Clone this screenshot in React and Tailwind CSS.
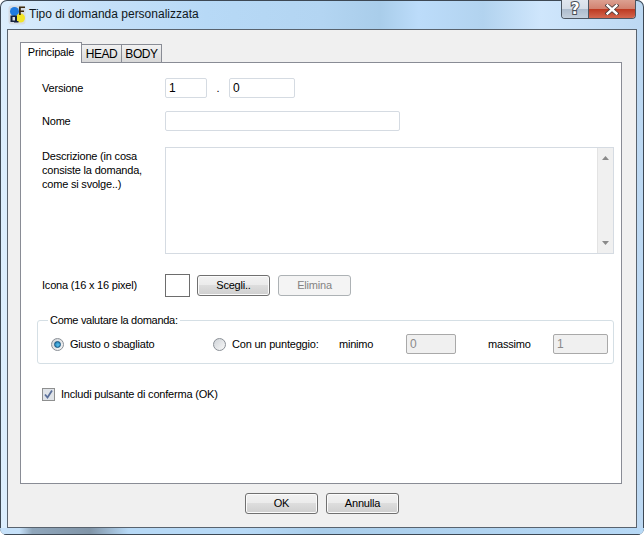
import React from "react";

const btn = "h-[21px] w-[73px] rounded-[3px] border border-[#707070] bg-[linear-gradient(#f2f2f2_0%,#ebebeb_48%,#dddddd_50%,#cfcfcf_100%)] text-center text-[11px] tracking-[-0.2px] text-black shadow-[inset_0_0_0_1px_#fbfbfb]";
const input = "h-[20px] rounded-[2px] border border-[#d5dbe2] bg-white pl-[3px] text-[12px] leading-[18px] text-black";

const AppIcon = () => (
    <svg width="18" height="20" viewBox="0 0 18 20" className="mr-[3px] shrink-0">
        <rect x="0.5" y="0.5" width="17" height="19" rx="3" fill="#d5dce4" />
        <circle cx="6.5" cy="6.5" r="4.5" fill="#1f7be0" />
        <circle cx="12.5" cy="13" r="4.5" fill="#f2e528" />
        <path d="M2.5 10.5h6.5v6.5H2.5z M4.5 12v3.5h2.5V12z" fill="#14213d" fillRule="evenodd" />
        <path d="M6 16h4.5v1.5H6z" fill="#14213d" />
        <path d="M11 1.5h6v1.5h-4.2v2.5H16V7h-3.2v3H11z" fill="#3a2a10" />
    </svg>
);

const Radio = ({ checked }) => (
    <span className={"flex h-[13px] w-[13px] items-center justify-center rounded-full border border-[#8a8f96] bg-[linear-gradient(135deg,#cfd3d8,#f8f8f8)]"}>
        {checked && <span className="h-[7px] w-[7px] rounded-full border border-[#14527f] bg-[radial-gradient(circle_at_60%_60%,#5cc3ef,#1670a8)]" />}
    </span>
);

const Row = ({ label, children, className }) => (
    <div className={"flex " + className}>
        <div className="w-[128px] shrink-0 pl-[5px]">{label}</div>
        {children}
    </div>
);

export default function App() {
    return (
        <div className="relative h-[535px] w-[644px] overflow-hidden rounded-[7px] bg-[linear-gradient(90deg,#dceefd_0%,#c6e1f9_15%,#b7d9f6_32%,#b3d5f2_50%,#a9cdea_59%,#bcdcfa_65%,#b2d3ef_75%,#cfe6fc_84%,#bcd8f2_100%)] font-['Liberation_Sans',sans-serif] text-[11px] tracking-[-0.2px] text-black shadow-[inset_0_0_0_1px_#3d4854]">
            {/* Title bar */}
            <div className="flex h-[29px] items-start pl-[8px] pt-[5px]">
                <AppIcon />
                <span className="mt-[2px] text-[12px] leading-[15px] tracking-normal text-[#101820]">Tipo di domanda personalizzata</span>
            </div>

            {/* Caption buttons */}
            <div className="absolute right-[8px] top-0 flex h-[19px] overflow-hidden rounded-b-[4px] border border-t-0 border-[#4c5662]">
                <div className="flex w-[27px] items-center justify-center border-r border-[#4c5662] bg-[linear-gradient(#e0e6ee_0%,#d5dde7_50%,#adbccd_52%,#c3cfdc_100%)]">
                    <span className="font-['DejaVu_Sans',sans-serif] text-[15px] font-bold leading-none text-white [paint-order:stroke_fill] [-webkit-text-stroke:2px_#4a4f57]">?</span>
                </div>
                <div className="flex w-[46px] items-center justify-center bg-[linear-gradient(#dca091_0%,#d28270_48%,#bd3a22_52%,#d4674f_100%)]">
                    <svg width="14" height="11" viewBox="0 0 14 11">
                        <path d="M2.5 1.5L11.5 9.5M11.5 1.5L2.5 9.5" stroke="#4a3a3a" strokeWidth="4" strokeLinecap="square" />
                        <path d="M2.5 1.5L11.5 9.5M11.5 1.5L2.5 9.5" stroke="#fff" strokeWidth="2.4" strokeLinecap="square" />
                    </svg>
                </div>
            </div>

            {/* Client area */}
            <div className="ml-[7px] h-[499px] w-[630px] border border-[#59636e] bg-[#f0f0f0] pl-[12px] pt-[12px]">
                {/* Tabs */}
                <div className="flex h-[20px] items-end pl-0">
                    <div className="z-10 -mb-px flex h-[21px] w-[62px] items-center justify-center border border-b-0 border-[#898c95] bg-white pb-[2px]">Principale</div>
                    <div className="flex h-[18px] w-[40px] items-center justify-center border border-b-0 border-l-0 border-[#898c95] bg-[linear-gradient(#f2f2f2,#d8d8d8)] text-[12px] tracking-[-0.4px]">HEAD</div>
                    <div className="flex h-[18px] w-[40px] items-center justify-center border border-b-0 border-l-0 border-[#898c95] bg-[linear-gradient(#f2f2f2,#d8d8d8)] text-[12px] tracking-[-0.4px]">BODY</div>
                </div>

                {/* Tab page */}
                <div className="h-[422px] w-[602px] border border-[#898c95] bg-white pl-[16px] pt-[15px]">
                    <Row label={<span className="leading-[20px]">Versione</span>} className="h-[20px]">
                        <div className={input + " w-[42px]"}>1</div>
                        <span className="w-[22px] text-center leading-[20px]">.</span>
                        <div className={input + " w-[66px]"}>0</div>
                    </Row>
                    <Row label={<span className="leading-[20px]">Nome</span>} className="mt-[13px] h-[20px]">
                        <div className={input + " w-[235px]"} />
                    </Row>
                    <Row
                        label={<div className="w-[108px] pt-[2px] leading-[14px]">Descrizione (in cosa consiste la domanda, come si svolge..)</div>}
                        className="mt-[16px] h-[107px]"
                    >
                        <div className="flex h-[107px] w-[449px] justify-end border border-[#d5dbe2] bg-white">
                            <div className="flex w-[16px] flex-col items-center justify-between border-l border-[#e3e3e3] bg-[#f0f0f0] py-[8px] pr-0">
                                <svg width="7" height="4" viewBox="0 0 7 4"><path d="M3.5 0L7 4H0z" fill="#8a8a8a" /></svg>
                                <svg width="7" height="4" viewBox="0 0 7 4"><path d="M3.5 4L7 0H0z" fill="#8a8a8a" /></svg>
                            </div>
                        </div>
                    </Row>
                    <Row label={<span className="leading-[23px]">Icona (16 x 16 pixel)</span>} className="mt-[20px] h-[23px] items-start">
                        <div className="h-[23px] w-[25px] border border-[#6d6d6d] bg-white" />
                        <button className={btn + " ml-[7px] mt-px"}>Scegli..</button>
                        <button className="ml-[8px] mt-px h-[21px] w-[73px] rounded-[3px] border border-[#adb2b5] bg-[#f4f4f4] text-[11px] tracking-[-0.2px] text-[#838383]">Elimina</button>
                    </Row>

                    {/* Group box */}
                    <fieldset className="mt-[16px] h-[51px] w-[577px] rounded-[3px] border border-[#d5dfe5] pl-[13px]">
                        <legend className="-ml-[3px] px-[2px] leading-[15px] tracking-[-0.3px]">Come valutare la domanda:</legend>
                        <div className="mt-[6px] flex h-[20px] items-center">
                            <Radio checked />
                            <span className="ml-[6px] w-[143px]">Giusto o sbagliato</span>
                            <Radio />
                            <span className="ml-[6px] w-[107px]">Con un punteggio:</span>
                            <span className="w-[67px]">minimo</span>
                            <div className="h-[20px] w-[50px] rounded-[2px] border border-[#a9a9a9] bg-[#f0f0f0] pl-[3px] text-[12px] leading-[18px] text-[#8a8a8a]">0</div>
                            <span className="ml-[32px] w-[65px]">massimo</span>
                            <div className="h-[20px] w-[55px] rounded-[2px] border border-[#a9a9a9] bg-[#f0f0f0] pl-[3px] text-[12px] leading-[18px] text-[#8a8a8a]">1</div>
                        </div>
                    </fieldset>

                    {/* Checkbox */}
                    <div className="ml-[5px] mt-[22px] flex items-center">
                        <span className="flex h-[13px] w-[13px] items-center justify-center border border-[#8e8f8f] bg-[#dfe3e8]">
                            <svg width="11" height="11" viewBox="0 0 11 11"><path d="M2 5.5L4.5 8.5L9 1.5" fill="none" stroke="#5a6f9a" strokeWidth="1.8" /></svg>
                        </span>
                        <span className="ml-[6px]">Includi pulsante di conferma (OK)</span>
                    </div>
                </div>

                {/* Footer buttons */}
                <div className="mt-[9px] flex pl-[225px]">
                    <button className={btn + " border-[#3c9fc9] shadow-[inset_0_0_0_1px_#bdeafc]"}>OK</button>
                    <button className={btn + " ml-[8px]"}>Annulla</button>
                </div>
            </div>

            {/* Bottom frame edge */}
            <div className="h-[7px] border-b border-[#3d4854] bg-[linear-gradient(90deg,#c6e1f9_3%,#8fa6bb_5%,#8195a8_14%,#b7d9f6_20%,#b7d9f6_38%,#a9cdea_50%,#b7d9f6_100%)]" />
        </div>
    );
}
